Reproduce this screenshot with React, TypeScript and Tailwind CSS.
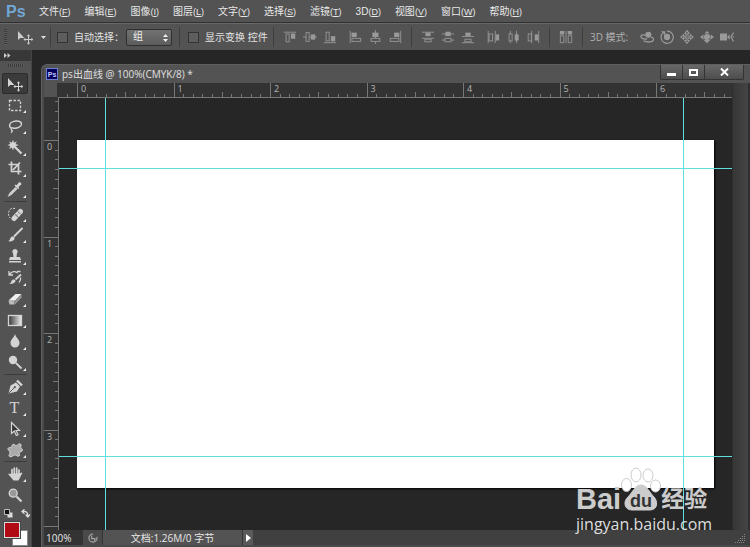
import React from "react";

const SANS = "font-['Open_Sans','Noto_Sans_CJK_SC',sans-serif]";

const MENUS = [
  ["文件", "F"], ["编辑", "E"], ["图像", "I"], ["图层", "L"], ["文字", "Y"], ["选择", "S"],
  ["滤镜", "T"], ["3D", "D"], ["视图", "V"], ["窗口", "W"], ["帮助", "H"],
];

function Icon({ children, size = "size-4" }: { children: React.ReactNode; size?: string }) {
  return (
    <svg viewBox="0 0 16 16" className={`${size} shrink-0`} fill="none" stroke="currentColor" aria-hidden="true">
      {children}
    </svg>
  );
}

const MoveShape = (
  <>
    <path d="M1 2v9l2.3-2h4z" fill="currentColor" stroke="none" />
    <path d="M11.5 6.5v8M7.5 10.5h8" />
    <path d="M11.5 5.2l-1.7 2h3.4zM11.5 15.8l-1.7-2h3.4zM6.4 10.5l2-1.7v3.4zM16.4 10.5l-2-1.7v3.4z" fill="currentColor" stroke="none" />
  </>
);

const TOOL_GROUPS: { height: string; tools: [string, React.ReactNode][] }[] = [
  {
    height: "h-[127px]",
    tools: [
      ["移动工具", MoveShape],
      ["矩形选框工具", <rect x="2.5" y="3.5" width="11" height="10" strokeDasharray="2.4 1.6" strokeWidth="1.3" />],
      ["套索工具", <path d="M4.5 9.8C1.5 8.8 2 4.8 6 3.6c4-1.200 8.500-.4 8.500 2.400 0 2.800-4.500 5-8.500 4-1.800-.4-2.600.6-1.600 1.600 1 .8 1.200 1.800-.4 3" strokeWidth="1.4" />],
      ["魔棒工具", <>
        <path d="M8 8l6.500 6.500" strokeWidth="2.2" />
        <path d="M6 .8l1 3 2.800-1.600L8.600 5l3 1-3 1.200 1.200 2.800L7 8.600l-1 3-1.200-3L2 10l1.400-2.800-3-1.200 3-1L2 2.200l2.800 1.600z" fill="currentColor" stroke="none" />
      </>],
      ["裁剪工具", <path d="M4.500 1.500v10h10M1.500 4.500h10v10M6 10l7-7.500" strokeWidth="1.700" />],
      ["吸管工具", <>
        <path d="M9 6.500L3 12.500l-1 2 2-1 6-6" strokeWidth="1.300" />
        <path d="M7.500 4.500l1.200-1 1 .8 2-2.800c1.500-1.200 3.600.8 2.400 2.300l-2.700 2.200.8 1-1 1.200z" fill="currentColor" stroke="none" />
      </>],
    ],
  },
  {
    height: "h-[170px]",
    tools: [
      ["污点修复画笔工具", <>
        <path d="M7 12.500l6.500-7" strokeWidth="5" strokeLinecap="round" />
        <path d="M8 8.500l4 3.500M10.500 5.500l3 2.500" stroke="#666" strokeWidth=".9" />
        <path d="M9.500 9h2" stroke="#666" strokeDasharray="1 1" />
        <path d="M8 2.500C4 1.500 1.500 4 1.500 7.500c0 2 .5 3.500 1.700 4.500" strokeDasharray="2 1.300" />
      </>],
      ["画笔工具", <>
        <path d="M15 1.500L7.500 9" strokeWidth="1.900" strokeLinecap="round" />
        <path d="M1 14c2.500-.2 1.800-3.200 3.800-4.400 1.700-.8 3.400.8 2.700 2.400-1 2.200-4.300 3-6.500 2z" fill="currentColor" stroke="none" />
      </>],
      ["仿制图章工具", <path d="M8 1a2.600 2.600 0 0 1 2 4.300L9.500 9H13l1 3H2l1-3h3.500L6 5.300A2.600 2.600 0 0 1 8 1zM2 13h12v1.500H2z" fill="currentColor" stroke="none" />],
      ["历史记录画笔工具", <>
        <path d="M14 5.500L8.500 10.500" strokeWidth="1.800" />
        <path d="M2 14.500c2.500 0 1.800-3 4-4 1.500-.5 3 .6 2.400 2-1 2-4 2.800-6.400 2z" fill="currentColor" stroke="none" />
        <path d="M2 2v4h4M2.500 5.500C5 2 8 2 10.500 4M10 2.500h3.500M13.500 8.500c.5 2 0 3.500-1.500 5" strokeWidth="1.300" />
      </>],
      ["橡皮擦工具", <>
        <path d="M1.500 9.500L8.500 3h6l-6.500 6.800z" fill="#efefef" stroke="none" />
        <path d="M1.500 9.800l6 .4v3.300h-5z" fill="#bcbcbc" stroke="none" />
        <path d="M8 10.300l6.500-6.800v3L8 13.500z" fill="#999" stroke="none" />
      </>],
      ["渐变工具", <>
        <defs><linearGradient id="toolGradient"><stop stopColor="#333" /><stop offset="1" stopColor="#eee" /></linearGradient></defs>
        <rect x="1.500" y="3.500" width="13" height="10" fill="url(#toolGradient)" strokeWidth="1.300" />
      </>],
      ["模糊工具", <path d="M8 1c.8 3.500 4.500 5.500 4.500 9A4.500 4.500 0 0 1 8 14.500 4.500 4.500 0 0 1 3.500 10C3.500 6.500 7.200 4.500 8 1z" fill="currentColor" stroke="none" />],
      ["减淡工具", <>
        <circle cx="6" cy="6" r="4.200" fill="currentColor" stroke="none" />
        <path d="M9 9l5.500 5.500" strokeWidth="1.800" />
      </>],
    ],
  },
  {
    height: "h-[84px]",
    tools: [
      ["钢笔工具", <>
        <path d="M1.500 14.500l2-8L9 3.500l4 4-3 5z" fill="currentColor" stroke="none" />
        <path d="M10 1.500l5 5" strokeWidth="2.400" />
        <path d="M2 14l5.500-5.500" stroke="#555" />
        <circle cx="7.800" cy="8.200" r="1.100" fill="#555" stroke="none" />
      </>],
      ["横排文字工具", null],
      ["路径选择工具", <path d="M4.500 1.500v11l2.800-2.500 2 4.500 1.700-.8-2-4.200h3.500z" fill="#333" strokeWidth="1.200" />],
      ["自定形状工具", <path d="M6 2.500c1.500-1 2 1.500 3.500 1C11 3 12 1 13.500 2s-.5 3 .5 4 2 1.500 1 3-3 .5-3 1.500 1.500 2.500 0 3.500-3-1.500-4.500-1-3.500 2.500-5 1.500 1-3 .5-4.500-2.500-2-2-3.500S4 6 4.500 5 4.500 3.500 6 2.500z" fill="#aaa" />],
    ],
  },
  {
    height: "h-[42px]",
    tools: [
      ["抓手工具", <>
        <path d="M5 9V3.500M7.300 8V2M9.700 8V2.200M12 9V4" strokeWidth="1.700" strokeLinecap="round" />
        <path d="M4.200 7.500h8.600L14.500 6.500c1 0 1 1-.2 2.500-1.200 2-1.500 3.500-2.800 5.500h-5C5 12.500 3 10.500 1.500 8.500c-.2-1.300 1-1.400 2-.4z" fill="currentColor" stroke="none" />
      </>],
      ["缩放工具", <>
        <circle cx="6.200" cy="6.200" r="4" fill="#999" strokeWidth="1.300" />
        <path d="M9.500 9.500l5 5" strokeWidth="2.200" />
      </>],
    ],
  },
];

const ALIGN_GROUPS: [string, React.ReactNode][][] = [
  [
    ["顶对齐", <><path d="M1 2.500h14" /><rect x="3.500" y="4.500" width="3.500" height="9" /><rect x="9" y="4" width="5" height="6" fill="currentColor" stroke="none" /></>],
    ["垂直居中对齐", <><path d="M0 8h16" /><rect x="3.500" y="3" width="3.500" height="10" fill="#535353" /><rect x="9" y="5" width="5" height="6" fill="currentColor" stroke="none" /></>],
    ["底对齐", <><path d="M1 14.500h14" /><rect x="3.500" y="2.500" width="3.500" height="10" /><rect x="9" y="7" width="5" height="6" fill="currentColor" stroke="none" /></>],
  ],
  [
    ["左对齐", <><path d="M2.500 1v14" /><rect x="4" y="3" width="6" height="5" fill="currentColor" stroke="none" /><rect x="4.500" y="9.500" width="10" height="3.500" /></>],
    ["水平居中对齐", <><path d="M8.500 0v16" /><rect x="5" y="3" width="7" height="5" fill="currentColor" stroke="none" /><rect x="3.500" y="9.500" width="10" height="3.500" fill="#535353" /></>],
    ["右对齐", <><path d="M14.500 1v14" /><rect x="7" y="3" width="6" height="5" fill="currentColor" stroke="none" /><rect x="2.500" y="9.500" width="10" height="3.500" /></>],
  ],
  [
    ["按顶分布", <><path d="M1 2.500h14M1 9.500h14" /><rect x="5" y="3" width="6" height="4" fill="currentColor" stroke="none" /><rect x="4.500" y="10.500" width="7" height="3" /></>],
    ["垂直居中分布", <><path d="M1 4.500h14M1 11.500h14" /><rect x="5" y="2" width="6" height="5" fill="currentColor" stroke="none" /><rect x="4.500" y="9.500" width="7" height="4" fill="#535353" /></>],
    ["按底分布", <><path d="M1 7.500h14M1 14.500h14" /><rect x="5" y="3" width="6" height="4" fill="currentColor" stroke="none" /><rect x="4.500" y="10.500" width="7" height="3" /></>],
  ],
  [
    ["按左分布", <><path d="M2.500 1v14M10.500 1v14" /><rect x="3.500" y="4.500" width="4" height="8" /><rect x="11" y="5" width="4" height="7" fill="currentColor" stroke="none" /></>],
    ["水平居中分布", <><path d="M5 1v14M12 1v14" /><rect x="3.500" y="4.500" width="3.500" height="8" fill="#535353" /><rect x="10" y="5" width="4.500" height="7" fill="currentColor" stroke="none" /></>],
    ["按右分布", <><path d="M6.500 1v14M14.500 1v14" /><rect x="2.500" y="4.500" width="3.500" height="8" /><rect x="10" y="5" width="4" height="7" fill="currentColor" stroke="none" /></>],
  ],
];

const MODES_3D: [string, React.ReactNode][] = [
  ["旋转 3D 对象", <><path d="M8 10C4 11 1 9.500 1 7.500 1 5.500 4 5 7 6M4 12.500c5 2 11 1.500 11.500-1.500.2-1.500-1.500-2.500-3-3" strokeWidth="1.500" /><circle cx="9.500" cy="5.500" r="3.500" fill="currentColor" stroke="none" /></>],
  ["滚动 3D 对象", <><path d="M3 3.500A7 7 0 1 0 8 1.200" strokeWidth="1.400" /><path d="M1 1.500h5v4.500z" fill="currentColor" stroke="none" /><circle cx="8" cy="8" r="3.600" fill="currentColor" stroke="none" /></>],
  ["拖动 3D 对象", <path d="M8 .8l2.500 3H9v3h3V5.500L15.200 8 12 10.500V9H9v3h1.500L8 15.200 5.500 12H7V9H4v1.500L.8 8 4 5.500V7h3V4H5.500z" strokeWidth="1.200" />],
  ["滑动 3D 对象", <><path d="M8 1l3 3H5zM8 15l4-4H4zM0 8l4-3v6zM16 8l-4-3v6z" fill="currentColor" stroke="none" /><circle cx="8" cy="8" r="3.500" fill="currentColor" stroke="none" /></>],
  ["缩放 3D 对象", <><path d="M0 4h8v8H0zM8 8l3-3v6z" fill="currentColor" stroke="none" /><path d="M15.500 3L12.500 8l3 5M14 8h2" strokeWidth="1.300" /></>],
];

function Divider() {
  return <span className="h-5 w-px shrink-0 border-l border-[#3e3e3e]" />;
}

function IconRow({ items }: { items: [string, React.ReactNode][] }) {
  return (
    <div className="flex gap-1.5">
      {items.map(([label, shape]) => (
        <button key={label} aria-label={label} className="flex">
          <Icon size="size-3.5">{shape}</Icon>
        </button>
      ))}
    </div>
  );
}

function OptionsBar() {
  return (
    <div className="flex h-[27px] shrink-0 items-center overflow-hidden border-t border-[#696969] bg-[#535353] pl-1 text-[#999]">
      <div className="flex w-[46px] shrink-0 items-center">
        <span className="h-4 w-[3px] bg-[repeating-linear-gradient(#3a3a3a_0_1px,#5c5c5c_1px_2px)]" />
        <button aria-label="移动工具预设" className="ml-2.5 flex items-center gap-2 text-[#ccc]">
          <Icon>{MoveShape}</Icon>
          <svg viewBox="0 0 5 3" className="h-[3px] w-[5px]" fill="#ddd"><path d="M0 0h5L2.500 3z" /></svg>
        </button>
      </div>
      <Divider />
      <label className="flex w-[75px] shrink-0 items-center gap-1.5 whitespace-nowrap pl-1.5 text-[10px] text-[#e2e2e2]">
        <input type="checkbox" className="size-[11px] shrink-0 appearance-none border border-[#333] bg-[#5e5e5e]" />
        自动选择：
      </label>
      <div className="relative flex w-[46px] shrink-0">
        <select aria-label="自动选择对象" className="h-[17px] w-full appearance-none rounded-xs border border-[#303030] bg-linear-to-b from-[#727272] to-[#5c5c5c] pl-1.5 text-[10px] leading-[14px] text-[#eee]">
          <option>组</option>
        </select>
        <svg viewBox="0 0 5 8" className="pointer-events-none absolute top-[5px] right-1 h-2 w-[5px]" fill="#eee">
          <path d="M0 3h5L2.500 0zM0 5h5L2.500 8z" />
        </svg>
      </div>
      <div className="w-[7px] shrink-0" />
      <Divider />
      <label className="flex w-[93px] shrink-0 items-center gap-1.5 whitespace-nowrap pl-2 text-[10px] text-[#e2e2e2]">
        <input type="checkbox" className="size-[11px] shrink-0 appearance-none border border-[#333] bg-[#5e5e5e]" />
        显示变换 控件
      </label>
      <Divider />
      <div className="flex shrink-0 gap-[11px] px-[9px]">
        <IconRow items={ALIGN_GROUPS[0]} />
        <IconRow items={ALIGN_GROUPS[1]} />
      </div>
      <Divider />
      <div className="flex shrink-0 gap-[11px] px-[9px]">
        <IconRow items={ALIGN_GROUPS[2]} />
        <IconRow items={ALIGN_GROUPS[3]} />
      </div>
      <Divider />
      <button aria-label="自动对齐图层" className="mx-[9px] flex">
        <Icon size="size-3.5">
          <path d="M1 1h5v4H1zM10 1h5v4h-5z" fill="currentColor" stroke="none" />
          <path d="M1.500 6.500h4v8h-4zM10.500 6.500h4v8h-4zM8 1v14" />
        </Icon>
      </button>
      <Divider />
      <span className={`${SANS} w-[57px] shrink-0 whitespace-nowrap pl-[7px] text-[10px] text-[#b0b0b0]`}>3D 模式:</span>
      <IconRow items={MODES_3D} />
    </div>
  );
}

function Toolbar() {
  return (
    <aside className="flex w-8 shrink-0 flex-col border-r border-[#444] bg-[#535353] text-[#d4d4d4]">
      <div className="flex h-[11px] shrink-0 items-center bg-[#383838] pl-1">
        <svg viewBox="0 0 7 5" className="h-[5px] w-[7px]" fill="#ccc"><path d="M0 0l3 2.500L0 5zM3.500 0l3 2.500-3 2.500z" /></svg>
      </div>
      <div className="mx-auto my-[3px] h-[3px] w-4 bg-[repeating-linear-gradient(90deg,#3a3a3a_0_1px,#5c5c5c_1px_2px)]" />
      <div className="flex flex-col gap-[3px] pt-[3px]">
        {TOOL_GROUPS.map((group, g) => (
          <div key={g} className={`${group.height} relative flex flex-col items-center justify-between pr-0.5`}>
            {group.tools.map(([label, shape], i) => {
              const active = g === 0 && i === 0;
              return (
                <button
                  key={label}
                  aria-label={label}
                  className={`relative flex h-[21px] w-[26px] items-center justify-center rounded-xs ${active ? "border border-[#2c2c2c] bg-[#3b3b3b]" : ""}`}
                >
                  {shape ? <Icon>{shape}</Icon> : <span className="font-['Liberation_Serif',serif] text-base leading-none">T</span>}
                  {!active && label !== "缩放工具" && (
                    <svg viewBox="0 0 3 3" className="absolute right-0.5 bottom-0.5 size-[3px]" fill="#eee"><path d="M3 0v3H0z" /></svg>
                  )}
                </button>
              );
            })}
            {g < 3 && <span className="absolute inset-x-1 -bottom-0.5 border-t border-[#3c3c3c]" />}
          </div>
        ))}
      </div>
      <div className="flex h-[17px] items-center gap-2 pl-1">
        <button aria-label="默认前景色和背景色" className="flex">
          <svg viewBox="0 0 9 9" className="size-[9px]"><path d="M3.500 3.500h5v5h-5z" fill="#ddd" /><path d="M.5.500h5v5h-5z" fill="#111" stroke="#bbb" /></svg>
        </button>
        <button aria-label="切换前景色和背景色" className="flex">
          <svg viewBox="0 0 9 9" className="size-[9px]" fill="none" stroke="#ddd" strokeWidth="1.300"><path d="M2 2.500c3-.5 5 1 4.800 4.500M3.500.3L1 2.500l2.500 2.200M4.700 5.500L6.800 8 9 5.500" /></svg>
        </button>
      </div>
      <div className="relative ml-1 h-[26px] w-6">
        <button aria-label="背景色" className="absolute right-0 bottom-[2px] size-4 border border-[#888] bg-white" />
        <button aria-label="前景色" className="absolute top-0 left-0 size-4 border border-[#ddd] bg-[#b00a14] outline outline-[#444]" />
      </div>
    </aside>
  );
}

const INCH = 96.5;
const TICKS = Array.from({ length: 220 }, (_, i) => i - 10);

function Ruler({ vertical, origin, last }: { vertical?: boolean; origin: number; last: number }) {
  const tick = (i: number) => {
    const p = Math.round(origin + (i * INCH) / 10) + 0.5;
    const start = i % 10 === 0 ? 0 : i % 5 === 0 ? 9 : 11;
    return vertical ? `M${start} ${p}H14` : `M${p} ${start}V14`;
  };
  const labels = Array.from({ length: last + 1 }, (_, i) => i);
  return (
    <svg
      className={vertical ? "absolute inset-0 h-full w-[15px]" : "block h-[15px] w-full"}
      stroke="#777"
      fill="none"
      shapeRendering="crispEdges"
    >
      <path d={TICKS.map(tick).join("")} />
      <path d={vertical ? "M14.500 0V3000" : "M0 14.500H3000"} />
      <g fill="#b5b5b5" stroke="none" className="font-['Open_Sans',sans-serif] text-[9px]">
        {labels.map((i) => {
          const p = origin + i * INCH;
          return <text key={i} x={vertical ? 3 : p + 4} y={vertical ? p + 10 : 9}>{i}</text>;
        })}
      </g>
    </svg>
  );
}

function Paw() {
  return (
    <svg viewBox="0 0 40 44" className="h-11 w-10 shrink-0" fill="#fff" stroke="#ccc">
      <ellipse cx="15" cy="8" rx="5" ry="7" />
      <ellipse cx="27" cy="8.500" rx="5" ry="6.500" />
      <ellipse cx="5.500" cy="18" rx="5" ry="6.500" />
      <ellipse cx="34.500" cy="19" rx="5" ry="6" />
      <path d="M20 18c6 0 8 7 13 12 4 4 4 13-4 13H11c-8 0-9-9-4-13 5-5 7-12 13-12z" fill="#ccc" />
      <text x="20" y="40" textAnchor="middle" fill="#333" stroke="none" className="font-['Liberation_Sans',sans-serif] text-lg font-bold">du</text>
    </svg>
  );
}

function Watermark() {
  return (
    <div className="pointer-events-none absolute right-10 bottom-[14px] w-[134px] text-[#ccc]">
      <div className="flex items-end">
        <span className="font-['Liberation_Sans',sans-serif] text-[29px] leading-[30px] font-bold">Bai</span>
        <div className="pb-[3px]"><Paw /></div>
        <span className="font-['Noto_Sans_CJK_SC',sans-serif] text-[23px] leading-[34px] font-bold whitespace-nowrap">经验</span>
      </div>
      <div className="font-['Open_Sans',sans-serif] text-base leading-5 text-[#ddd]">jingyan.baidu.com</div>
    </div>
  );
}

function DocumentWindow() {
  return (
    <section className="relative mt-3.5 ml-[9px] flex min-w-0 flex-1 flex-col rounded-tl-md border-t border-l border-[#5f5f5f] bg-[#4a4a4a] pl-0.5">
      <header className="flex h-[18px] shrink-0 items-center bg-[#535353] pl-0.5">
        <span className="flex size-3 items-center justify-center border border-[#6f7fd0] bg-[#00005c] font-['Liberation_Sans',sans-serif] text-[7px] leading-none font-bold text-[#c4caff]">Ps</span>
        <h1 className={`${SANS} ml-1 flex-1 text-[10px] leading-4 text-[#e0e0e0]`}>ps出血线 @ 100%(CMYK/8) *</h1>
        <div className="mr-1.5 flex h-[15px] self-start rounded-b-xs border border-t-0 border-[#333] bg-linear-to-b from-[#686868] to-[#4d4d4d] text-white">
          <button aria-label="最小化" className="flex w-[22px] items-center justify-center border-r border-[#333]"><span className="mt-1 h-[3px] w-[9px] bg-white" /></button>
          <button aria-label="最大化" className="flex w-[22px] items-center justify-center border-r border-[#333]"><span className="h-[7px] w-[9px] border-2 border-white" /></button>
          <button aria-label="关闭" className="flex w-[38px] items-center justify-center">
            <svg viewBox="0 0 9 8" className="h-2 w-[9px]" stroke="#fff" strokeWidth="2"><path d="M1 .5l7 7M8 .5l-7 7" /></svg>
          </button>
        </div>
      </header>
      <div className="flex min-h-0 flex-1">
        <div className="flex w-[15px] shrink-0 flex-col bg-[#333]">
          <div className="h-[14px] w-[13px] bg-[#535353]" />
          <div className="relative flex-1 overflow-hidden"><Ruler vertical origin={43} last={3} /></div>
        </div>
        <div className="flex min-w-0 flex-1 flex-col">
          <div className="h-[15px] shrink-0 overflow-hidden bg-[#333]"><Ruler origin={18} last={6} /></div>
          <main className="relative flex flex-1 bg-[#262626] px-[18px] py-[42px]">
            <div className="flex-1 bg-white shadow-[1px_1px_2px_#000]" />
            <span className="absolute inset-y-0 left-[46px] w-px bg-[#5fe0e0]" />
            <span className="absolute inset-y-0 right-12 w-px bg-[#5fe0e0]" />
            <span className="absolute inset-x-0 top-[70px] h-px bg-[#5fe0e0]" />
            <span className="absolute inset-x-0 bottom-[73px] h-px bg-[#5fe0e0]" />
          </main>
        </div>
        <div className="w-4 shrink-0 border-l border-[#2e2e2e] bg-linear-to-r from-[#363636] to-[#454545]" />
        <div className="w-0.5 shrink-0 bg-[#2e2e2e]" />
      </div>
      <footer className={`${SANS} mb-[3px] flex h-[15px] shrink-0 items-center bg-[#404040] text-[10px] leading-none text-[#e6e6e6]`}>
        <span className="flex h-full w-[39px] items-center bg-[#333] pl-0.5">100%</span>
        <button aria-label="状态" className="flex h-full w-5 items-center justify-center border-r border-[#333] bg-[#4a4a4a] text-[#aaa]">
          <Icon size="size-2.5"><circle cx="8" cy="8" r="6.500" strokeWidth="1.800" strokeDasharray="30 8" /><path d="M6 4v5h5v4" strokeWidth="1.800" /></Icon>
        </button>
        <span className="flex h-full w-[140px] items-center justify-center border-r border-[#333] bg-[#535353]">文档:1.26M/0 字节</span>
        <button aria-label="状态选项" className="flex h-full w-2.5 items-center justify-center bg-[#5a5a5a]">
          <svg viewBox="0 0 5 8" className="h-2 w-[5px]" fill="#fff"><path d="M0 0l5 4-5 4z" /></svg>
        </button>
        <svg viewBox="0 0 12 12" className="mr-1 ml-auto size-3" fill="none" stroke="#888" strokeDasharray="1 1"><path d="M1 10.500h10M4 8.500h7M6 6.500h5M8 4.500h3M10 2.500h1" /></svg>
      </footer>
      <Watermark />
    </section>
  );
}

export default function App() {
  return (
    <div className="flex min-h-screen w-full flex-col overflow-hidden bg-[#262626] font-['Liberation_Sans','Noto_Sans_CJK_SC',sans-serif]">
      <nav className="flex h-[23px] shrink-0 items-center border-b border-[#303030] bg-[#535353] pt-0.5 pl-1.5 text-[10px] leading-none text-[#e8e8e8]">
        <span className="w-[33px] shrink-0 text-base leading-none font-bold text-[#72a7d6]">Ps</span>
        <div className="flex gap-3.5 whitespace-nowrap">
          {MENUS.map(([name, key]) => (
            <button key={key}>
              {name}<span className="text-[9px]">(<u>{key}</u>)</span>
            </button>
          ))}
        </div>
      </nav>
      <OptionsBar />
      <div className="flex flex-1">
        <Toolbar />
        <DocumentWindow />
      </div>
    </div>
  );
}
